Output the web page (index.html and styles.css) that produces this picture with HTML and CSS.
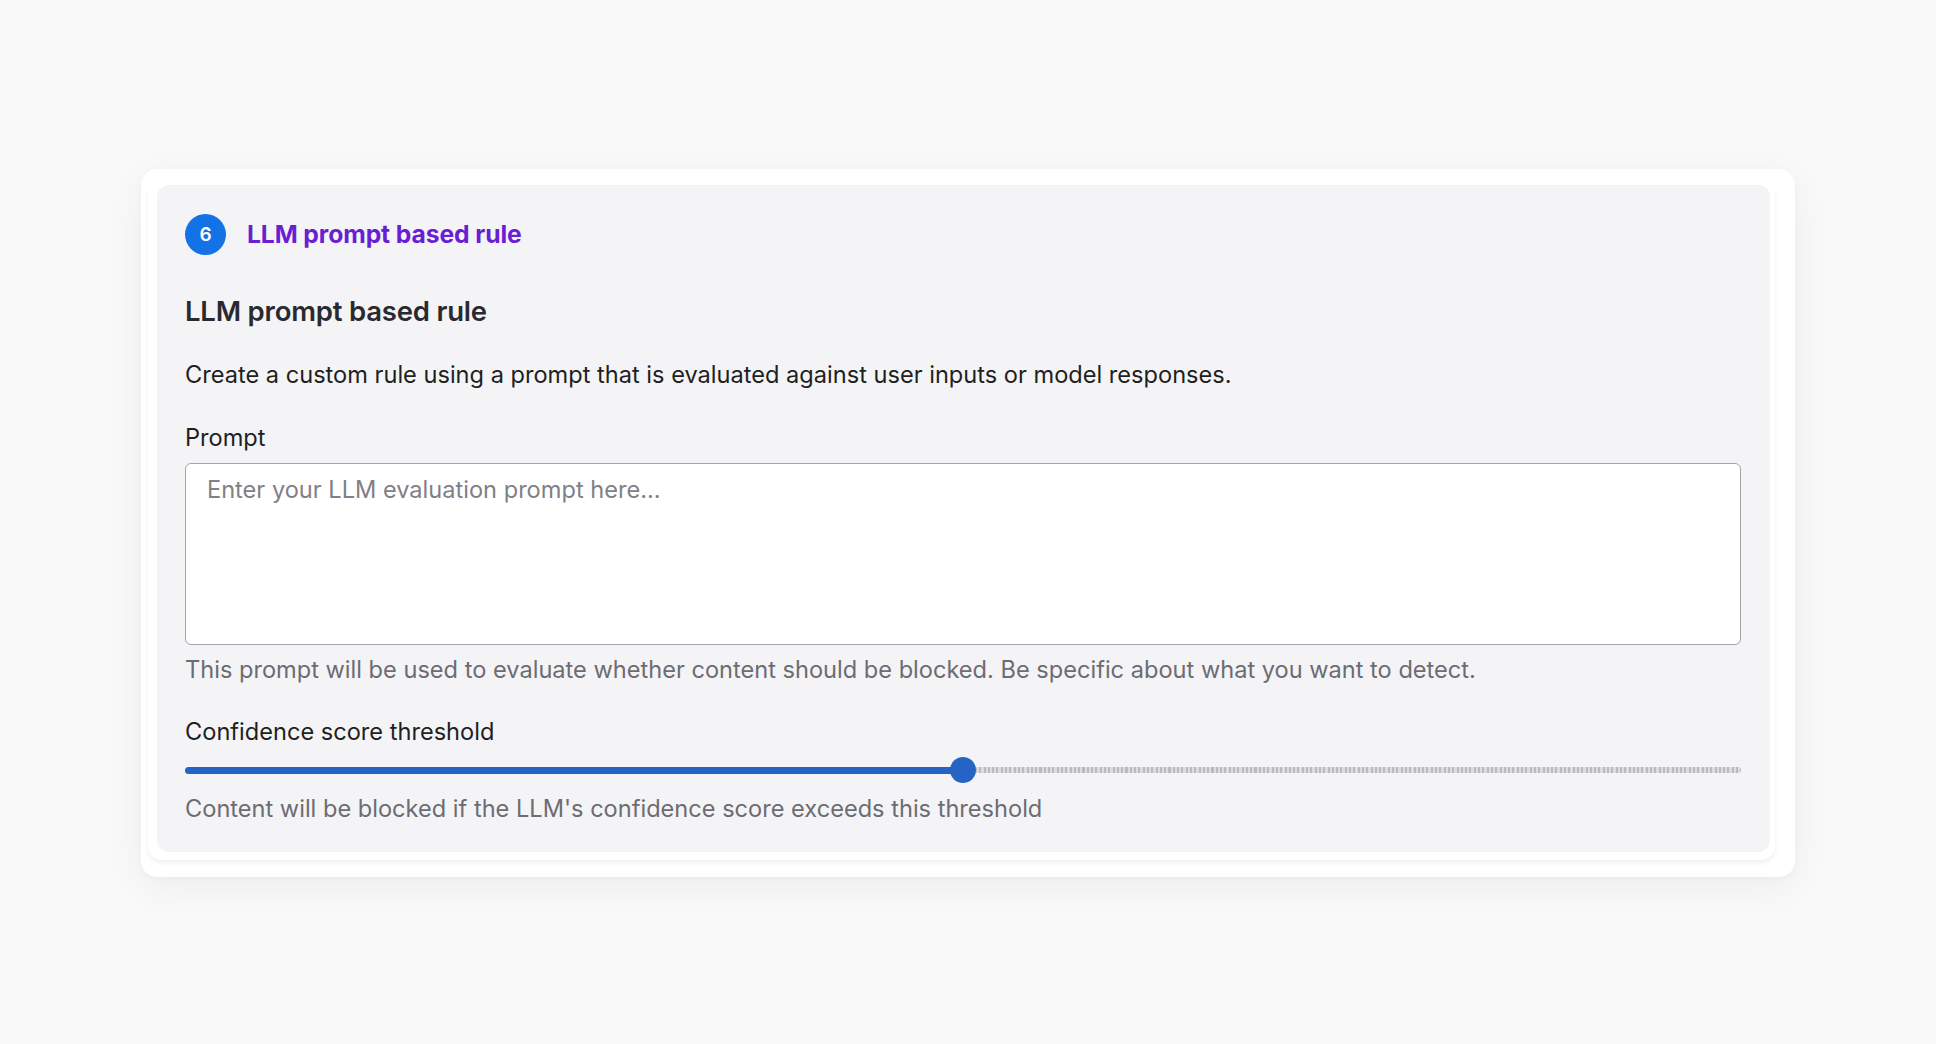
FILE: index.html
```html
<!DOCTYPE html>
<html lang="en">
<head>
<meta charset="utf-8">
<title>LLM prompt based rule</title>
<link rel="stylesheet" href="styles.css">
</head>
<body>
<main class="stage">
  <section class="outer-card">
    <div class="mid-layer">
      <div class="rule-card">
        <div class="step-row">
          <span class="step-badge">6</span>
          <span class="step-title">LLM prompt based rule</span>
        </div>
        <h2 class="rule-heading">LLM prompt based rule</h2>
        <p class="rule-desc">Create a custom rule using a prompt that is evaluated against user inputs or model responses.</p>
        <label class="field-label" for="prompt">Prompt</label>
        <textarea id="prompt" class="prompt-box" placeholder="Enter your LLM evaluation prompt here..."></textarea>
        <p class="help-text help-first">This prompt will be used to evaluate whether content should be blocked. Be specific about what you want to detect.</p>
        <div class="field-label threshold-label">Confidence score threshold</div>
        <div class="slider">
          <div class="slider-fill" style="width: 50%"></div>
          <div class="slider-rest"></div>
          <div class="slider-thumb" style="left: 50%"></div>
        </div>
        <p class="help-text help-last">Content will be blocked if the LLM's confidence score exceeds this threshold</p>
      </div>
    </div>
  </section>
</main>
</body>
</html>
```
FILE: styles.css
```css
* { box-sizing: border-box; }
html, body {
  margin: 0;
  padding: 0;
  background: #f9f9fa;
  font-family: Inter, "Noto Sans", "Liberation Sans", sans-serif;
  color: #1f1f22;
}
.stage {
  padding: 169px 141px 0 141px;
  height: 1044px;
}
.outer-card {
  width: 1654px;
  height: 708px;
  background: #ffffff;
  border-radius: 16px;
  box-shadow: 0 10px 40px rgba(0,0,0,0.05), 0 2px 6px rgba(0,0,0,0.03);
  padding: 13px 20px 17px 7px;
}
.mid-layer {
  height: 100%;
  background: #ffffff;
  border-radius: 14px;
  box-shadow: 0 3px 5px rgba(0,0,0,0.06);
  padding: 3px 5px 8px 9px;
}
.rule-card {
  height: 100%;
  background: #f4f4f7;
  border-radius: 12px;
  padding: 29px 29px 0 28px;
  display: flex;
  flex-direction: column;
}
.step-row {
  display: flex;
  align-items: center;
  gap: 21px;
  height: 40px;
}
.step-badge {
  width: 41px;
  height: 41px;
  border-radius: 50%;
  background: #1272e6;
  color: #fff;
  font-size: 19px;
  font-weight: 600;
  display: flex;
  align-items: center;
  justify-content: center;
}
.step-title {
  color: #6a1ed4;
  font-size: 24.7px;
  font-weight: 700;
  letter-spacing: -0.1px;
}
.rule-heading {
  margin: 0;
  margin-top: 40px;
  font-size: 27.5px;
  line-height: 34px;
  font-weight: 600;
  color: #2a2a2e;
  letter-spacing: -0.2px;
}
.rule-desc {
  margin: 0;
  margin-top: 31px;
  font-size: 23.6px;
  line-height: 32px;
  color: #1f1f22;
}
.field-label {
  display: block;
  font-size: 23.6px;
  line-height: 32px;
  color: #1f1f22;
}
label.field-label { margin-top: 31px; }
.prompt-box {
  display: block;
  margin-top: 9px;
  width: 100%;
  height: 182px;
  resize: none;
  border: 1.5px solid #a3a3a8;
  border-radius: 6px;
  background: #ffffff;
  padding: 10px 21px;
  font-family: inherit;
  font-size: 23.6px;
  line-height: 32px;
  color: #1f1f22;
  outline: none;
}
.prompt-box::placeholder { color: #808086; }
.help-text {
  margin: 0;
  font-size: 23.6px;
  line-height: 32px;
  color: #6c6c72;
}
.help-first { margin-top: 9px; }
.threshold-label { margin-top: 30px; }
.slider {
  position: relative;
  height: 26px;
  margin-top: 9px;
  display: flex;
  align-items: center;
}
.slider-fill {
  height: 7px;
  background: #2563c4;
  border-radius: 4px;
}
.slider-rest {
  flex: 1;
  height: 6px;
  margin-left: 12px;
  background: repeating-linear-gradient(90deg, #b9b9be 0 2px, #dcdce0 2px 4.3px);
  border-radius: 3px;
}
.slider-thumb {
  position: absolute;
  top: 0;
  width: 26px;
  height: 26px;
  margin-left: -13px;
  border-radius: 50%;
  background: #2563c4;
}
.help-last { margin-top: 10px; }
```
